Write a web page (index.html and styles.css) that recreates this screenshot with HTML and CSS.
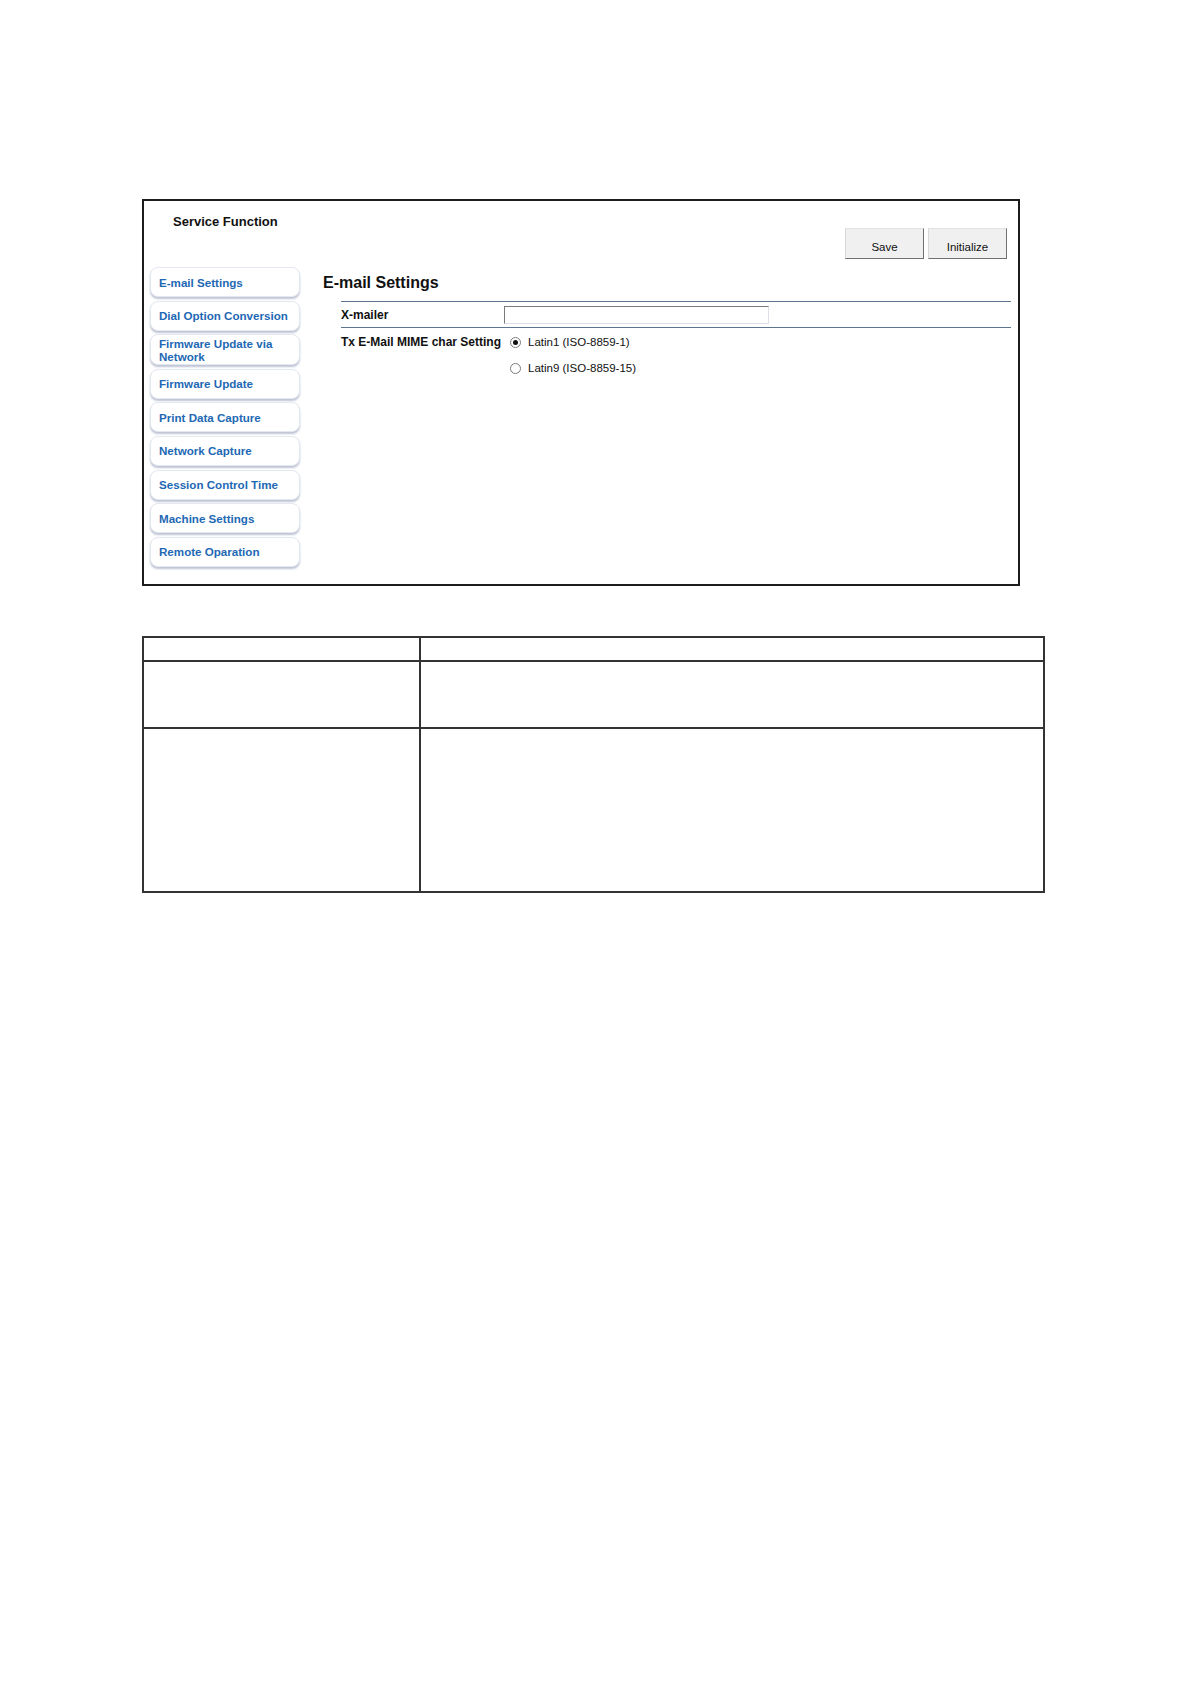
FILE: index.html
```html
<!DOCTYPE html>
<html>
<head>
<meta charset="utf-8">
<title>Service Function</title>
<link rel="stylesheet" href="styles.css">
</head>
<body>
<div class="frame">
  <div class="header">
    <div class="title">Service Function</div>
    <div class="actions">
      <button class="btn">Save</button>
      <button class="btn">Initialize</button>
    </div>
  </div>
  <div class="main">
    <nav class="sidebar">
      <a class="nav-item">E-mail Settings</a>
      <a class="nav-item">Dial Option Conversion</a>
      <a class="nav-item two">Firmware Update via<br>Network</a>
      <a class="nav-item">Firmware Update</a>
      <a class="nav-item">Print Data Capture</a>
      <a class="nav-item">Network Capture</a>
      <a class="nav-item">Session Control Time</a>
      <a class="nav-item">Machine Settings</a>
      <a class="nav-item">Remote Oparation</a>
    </nav>
    <section class="content">
      <h1 class="heading">E-mail Settings</h1>
      <div class="settings">
        <div class="row row-input">
          <div class="label">X-mailer</div>
          <div class="field"><span class="textbox"></span></div>
        </div>
        <div class="row row-radio">
          <div class="label">Tx E-Mail MIME char Setting</div>
          <div class="field options">
            <div class="option"><span class="radio checked"></span><span>Latin1 (ISO-8859-1)</span></div>
            <div class="option"><span class="radio"></span><span>Latin9 (ISO-8859-15)</span></div>
          </div>
        </div>
      </div>
    </section>
  </div>
</div>
<table class="grid">
  <tr class="r1"><td class="c1"></td><td></td></tr>
  <tr class="r2"><td class="c1"></td><td></td></tr>
  <tr class="r3"><td class="c1"></td><td></td></tr>
</table>
</body>
</html>
```
FILE: styles.css
```css
html, body {
  margin: 0;
  padding: 0;
  background: #ffffff;
}
body {
  font-family: "Liberation Sans", Arial, sans-serif;
  color: #111;
  padding-top: 199px;
  padding-left: 142px;
}
.frame {
  box-sizing: border-box;
  width: 878px;
  height: 387px;
  border: 2px solid #1c1c1c;
  display: flex;
  flex-direction: column;
}
.header {
  display: flex;
  justify-content: space-between;
  height: 58px;
  padding: 13px 11px 0 29px;
  box-sizing: border-box;
}
.title {
  font-size: 13px;
  font-weight: bold;
  line-height: 15px;
  color: #111;
}
.actions {
  align-self: flex-end;
  display: flex;
  gap: 4px;
}
.btn {
  box-sizing: border-box;
  width: 79px;
  height: 31px;
  margin: 0;
  padding: 7px 0 0 0;
  font-family: "Liberation Sans", Arial, sans-serif;
  font-size: 11.5px;
  color: #111;
  background: #f0f0f0;
  border: 1px solid;
  border-color: #e2e2e2 #707070 #707070 #d8d8d8;
  border-radius: 0;
}
.main {
  display: flex;
  padding-top: 8px;
}
.sidebar {
  margin-left: 6px;
  width: 150px;
  display: flex;
  flex-direction: column;
  gap: 3.6px;
}
.nav-item {
  box-sizing: border-box;
  height: 30px;
  display: flex;
  align-items: center;
  padding-left: 8px;
  font-size: 11.6px;
  font-weight: bold;
  line-height: 13px;
  color: #1e68b4;
  background: #fff;
  border: 1px solid #e4e8f0;
  border-radius: 8px;
  box-shadow: 0 2px 2px rgba(110, 125, 160, 0.45);
}
.nav-item.two {
  height: 31px;
}
.content {
  margin-left: 23px;
  flex: 1;
}
.heading {
  margin: 6px 0 0 0;
  font-size: 16px;
  line-height: 20px;
  font-weight: bold;
  color: #111;
}
.settings {
  margin: 8px 0 0 18px;
  width: 670px;
  border-top: 1px solid #5b7591;
}
.row {
  display: flex;
}
.row-input {
  height: 25px;
  border-bottom: 1px solid #5b7591;
  align-items: center;
}
.label {
  width: 163px;
  flex: none;
  font-size: 12px;
  font-weight: bold;
  color: #111;
}
.textbox {
  display: block;
  box-sizing: border-box;
  width: 265px;
  height: 18px;
  border: 1px solid;
  border-color: #7a7a7a #e2dde6 #e2dde6 #7a7a7a;
  background: #fff;
}
.row-radio {
  padding-top: 6px;
}
.row-radio .label {
  line-height: 16px;
}
.options {
  display: flex;
  flex-direction: column;
  gap: 10px;
}
.option {
  display: flex;
  align-items: center;
  height: 16px;
  font-size: 11.5px;
  color: #111;
}
.radio {
  box-sizing: border-box;
  width: 11px;
  height: 11px;
  margin: 0 7px 0 6px;
  border: 1px solid #7c7c7c;
  border-radius: 50%;
  background: #fff;
  display: flex;
  align-items: center;
  justify-content: center;
}
.radio.checked::after {
  content: "";
  width: 5px;
  height: 5px;
  border-radius: 50%;
  background: #111;
}
.grid {
  margin-top: 50px;
  width: 903px;
  border-collapse: collapse;
  table-layout: fixed;
}
.grid td {
  border: 2px solid #333;
  padding: 0;
}
.grid .c1 {
  width: 275px;
}
.r1 { height: 24px; }
.r2 { height: 67px; }
.r3 { height: 164px; }
```
